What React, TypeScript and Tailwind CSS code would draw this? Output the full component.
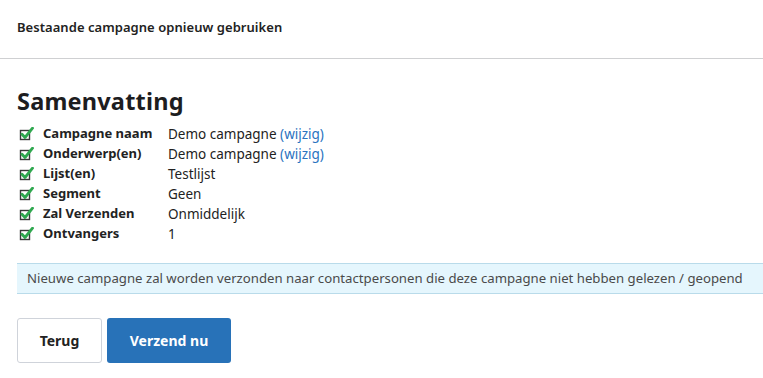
import React from "react";

function CheckIcon() {
  return (
    <svg width="15" height="14" viewBox="0 0 15 14" className="shrink-0">
      <rect x="1.5" y="3.5" width="9" height="9" fill="#fff" stroke="#3a3a3a" strokeWidth="1.4" />
      <path d="M3 7.2 L6 10.5 L13.5 1.2" fill="none" stroke="#2fa84f" strokeWidth="2.8" strokeLinecap="round" strokeLinejoin="round" />
    </svg>
  );
}

const rows: { label: string; value: string; edit?: boolean }[] = [
  { label: "Campagne naam", value: "Demo campagne", edit: true },
  { label: "Onderwerp(en)", value: "Demo campagne", edit: true },
  { label: "Lijst(en)", value: "Testlijst" },
  { label: "Segment", value: "Geen" },
  { label: "Zal Verzenden", value: "Onmiddelijk" },
  { label: "Ontvangers", value: "1" },
];

export default function App() {
  return (
    <div
      className="w-[763px] h-[378px] bg-white text-[#1f1f1f] overflow-hidden"
      style={{ fontFamily: '"Noto Sans", "Open Sans", sans-serif' }}
    >
      <div className="h-[59px] flex items-center px-[17px] border-b border-[#cfd0d2]">
        <h2 className="text-[13px] font-semibold text-[#222] tracking-[0.05px] mt-[-3px]">Bestaande campagne opnieuw gebruiken</h2>
      </div>
      <div className="pl-[17px] pt-[25px]">
        <h1 className="text-[23.5px] leading-[34px] font-bold text-[#1d1d1f] tracking-[0.2px]">Samenvatting</h1>
        <div className="mt-[6px] flex flex-col">
          {rows.map((r) => (
            <div key={r.label} className="flex items-center h-[20px] text-[13.5px]">
              <div className="w-[26px] flex items-center pl-[2px]">
                <CheckIcon />
              </div>
              <div className="w-[125px] font-bold text-[#222] text-[13px]">{r.label}</div>
              <div className="text-[#222]">
                {r.value}
                {r.edit && <span className="text-[#2a73c0]"> (wijzig)</span>}
              </div>
            </div>
          ))}
        </div>
      </div>
      <div className="ml-[17px] mt-[19px] h-[31px] bg-[#e5f6fd] border-y border-[#b9dbea] flex items-center pl-[10px] text-[13.2px] text-[#4a4a4a] whitespace-nowrap">
        Nieuwe campagne zal worden verzonden naar contactpersonen die deze campagne niet hebben gelezen / geopend
      </div>
      <div className="ml-[17px] mt-[24px] flex gap-[5px]">
        <button className="w-[85px] h-[45px] rounded-[3px] border border-[#cfd3da] bg-white text-[14px] font-bold text-[#222]">
          Terug
        </button>
        <button className="w-[124px] h-[45px] rounded-[3px] bg-[#2872b8] text-[14px] font-bold text-white">
          Verzend nu
        </button>
      </div>
    </div>
  );
}
